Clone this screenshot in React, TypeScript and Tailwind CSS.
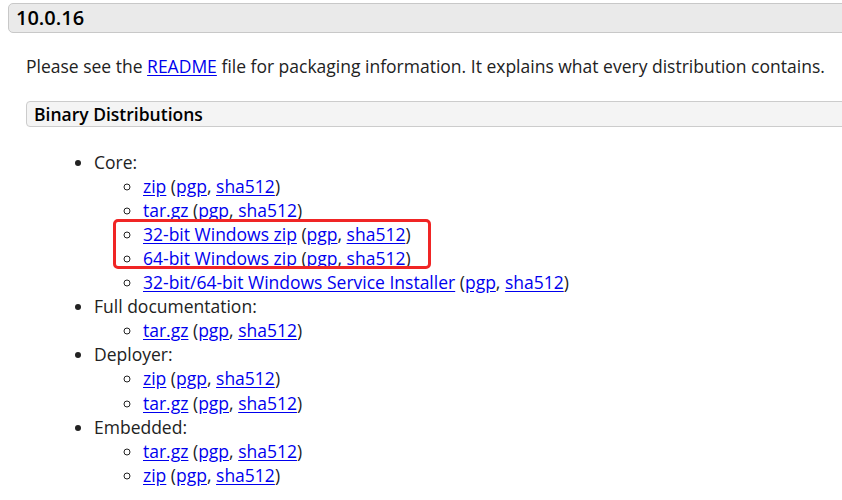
import React from "react";

const A = ({ children }: { children: React.ReactNode }) => (
  <a href="#" className="text-[#0000ee] underline underline-offset-[2px]">
    {children}
  </a>
);

const Item = ({ name }: { name: string }) => (
  <li>
    <A>{name}</A> (<A>pgp</A>, <A>sha512</A>)
  </li>
);

export default function App() {
  return (
    <div
      className="relative w-[842px] h-[500px] overflow-hidden bg-white text-[#222] text-[17.5px] leading-[24.04px]"
      style={{ fontFamily: '"Open Sans", "Liberation Sans", sans-serif' }}
    >
      <div className="ml-[8px] mt-[3px] -mr-[10px] h-[30px] flex items-center pl-[7px] bg-[#eaeaea] border border-[#c8c8c8] rounded-[5px] text-[20px] font-semibold text-black">
        10.0.16
      </div>
      <div className="pl-[26px]">
        <p className="mt-[21px] text-[#222]">
          Please see the <A>README</A> file for packaging information. It explains what every distribution contains.
        </p>
        <div className="mt-[23px] -mr-[10px] h-[26px] flex items-center pl-[7px] bg-[#f4f4f4] border border-[#cccccc] rounded-[4px] text-[17.5px] font-semibold text-black">
          Binary Distributions
        </div>
        <ul className="mt-[23px] list-disc pl-[68px]">
          <li>
            Core:
            <ul className="list-[circle] pl-[49px]">
              <Item name="zip" />
              <Item name="tar.gz" />
              <Item name="32-bit Windows zip" />
              <Item name="64-bit Windows zip" />
              <Item name="32-bit/64-bit Windows Service Installer" />
            </ul>
          </li>
          <li>
            Full documentation:
            <ul className="list-[circle] pl-[49px]">
              <Item name="tar.gz" />
            </ul>
          </li>
          <li>
            Deployer:
            <ul className="list-[circle] pl-[49px]">
              <Item name="zip" />
              <Item name="tar.gz" />
            </ul>
          </li>
          <li>
            Embedded:
            <ul className="list-[circle] pl-[49px]">
              <Item name="tar.gz" />
              <Item name="zip" />
            </ul>
          </li>
        </ul>
      </div>
      <div className="absolute left-[113px] top-[219px] w-[318px] h-[50px] border-[3px] border-[#f02525] rounded-[5px] pointer-events-none" />
    </div>
  );
}
